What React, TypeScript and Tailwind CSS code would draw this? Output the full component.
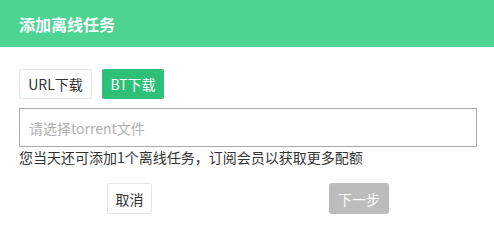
import React from "react";

export default function App() {
  const font = { fontFamily: '"Microsoft YaHei", "Noto Sans CJK SC", "Liberation Sans", sans-serif' };
  return (
    <div className="w-[494px] h-[249px] bg-white overflow-hidden" style={font}>
      <div className="h-[47px] bg-[#4dd493] flex items-center px-[19px]">
        <span className="text-white text-[16px] font-bold leading-none">添加离线任务</span>
      </div>
      <div className="px-[19px] pt-[22px]">
        <div className="flex gap-[10px]">
          <button className="h-[30px] w-[73px] border border-[#e6e6e6] rounded-[2px] bg-white text-[#333] text-[14px] leading-none">URL下载</button>
          <button className="h-[30px] w-[62px] rounded-[2px] bg-[#2fc077] text-white text-[14px] leading-none">BT下载</button>
        </div>
        <div className="mt-[9px] h-[39px] w-[458px] border border-[#a9a9a9] flex items-center px-[9px]">
          <span className="text-[14px] text-[#b0b0b0] leading-none">请选择torrent文件</span>
        </div>
        <div className="mt-[2px] text-[14px] text-[#333] leading-[16px]">您当天还可添加1个离线任务，订阅会员以获取更多配额</div>
        <div className="mt-[18px] flex">
          <button className="ml-[88px] h-[31px] w-[45px] border border-[#e6e6e6] rounded-[2px] bg-white text-[#333] text-[14px] leading-none">取消</button>
          <button className="ml-[177px] h-[31px] w-[60px] rounded-[3px] bg-[#bcbcbc] text-white text-[14px] leading-none">下一步</button>
        </div>
      </div>
    </div>
  );
}
